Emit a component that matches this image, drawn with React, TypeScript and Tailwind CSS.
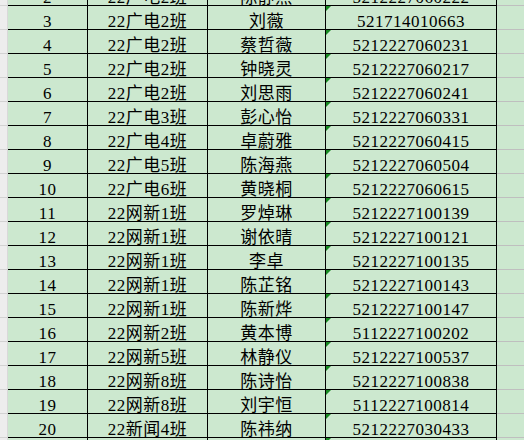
const ROWS: [string, string, string, string][] = [
  ['2', '22广电2班', '陈静燕', '5212227060222'],
  ['3', '22广电2班', '刘薇', '521714010663'],
  ['4', '22广电2班', '蔡哲薇', '5212227060231'],
  ['5', '22广电2班', '钟晓灵', '5212227060217'],
  ['6', '22广电2班', '刘思雨', '5212227060241'],
  ['7', '22广电3班', '彭心怡', '5212227060331'],
  ['8', '22广电4班', '卓蔚雅', '5212227060415'],
  ['9', '22广电5班', '陈海燕', '5212227060504'],
  ['10', '22广电6班', '黄晓桐', '5212227060615'],
  ['11', '22网新1班', '罗焯琳', '5212227100139'],
  ['12', '22网新1班', '谢依晴', '5212227100121'],
  ['13', '22网新1班', '李卓', '5212227100135'],
  ['14', '22网新1班', '陈芷铭', '5212227100143'],
  ['15', '22网新1班', '陈新烨', '5212227100147'],
  ['16', '22网新2班', '黄本博', '5112227100202'],
  ['17', '22网新5班', '林静仪', '5212227100537'],
  ['18', '22网新8班', '陈诗怡', '5212227100838'],
  ['19', '22网新8班', '刘宇恒', '5112227100814'],
  ['20', '22新闻4班', '陈祎纳', '5212227030433'],
  ['', '', '', ''],
]

// cell text sits on the bottom edge, like a spreadsheet's default alignment
const cell = 'flex h-[24px] items-end justify-center overflow-hidden whitespace-nowrap border-b border-black leading-none'

export default function App() {
  return (
    <div
      className="h-[440px] w-[524px] overflow-hidden bg-[#cce8cf] text-[17px] tracking-[0.5px] text-black"
      style={{ fontFamily: '"Liberation Serif", "Noto Sans CJK SC", serif' }}
    >
      <div className="-mt-[18px]">
        {ROWS.map(([no, cls, name, id], i) => (
          <div key={i} className="grid grid-cols-[8px_80px_120px_118px_171px_1fr]">
            <div className="h-[24px] border-r border-b border-r-[#d9d9d9] border-b-[#d2d2d2] bg-[#ededed]" />
            <div className={`${cell} border-r`}>
              <span className="relative top-[1px]">{no}</span>
            </div>
            <div className={`${cell} border-r`}>
              <span className="relative top-[1px]">{cls}</span>
            </div>
            <div className={`${cell} border-r`}>
              <span className="relative top-[1px]">{name}</span>
            </div>
            <div className={`${cell} relative border-r`}>
              <span className="absolute top-0 left-0 h-0 w-0 border-t-[5px] border-r-[5px] border-t-[#178a22] border-r-transparent" />
              <span className="relative top-[1px]">{id}</span>
            </div>
            <div className="h-[24px] border-b border-[#bfbfbf]" />
          </div>
        ))}
      </div>
    </div>
  )
}
